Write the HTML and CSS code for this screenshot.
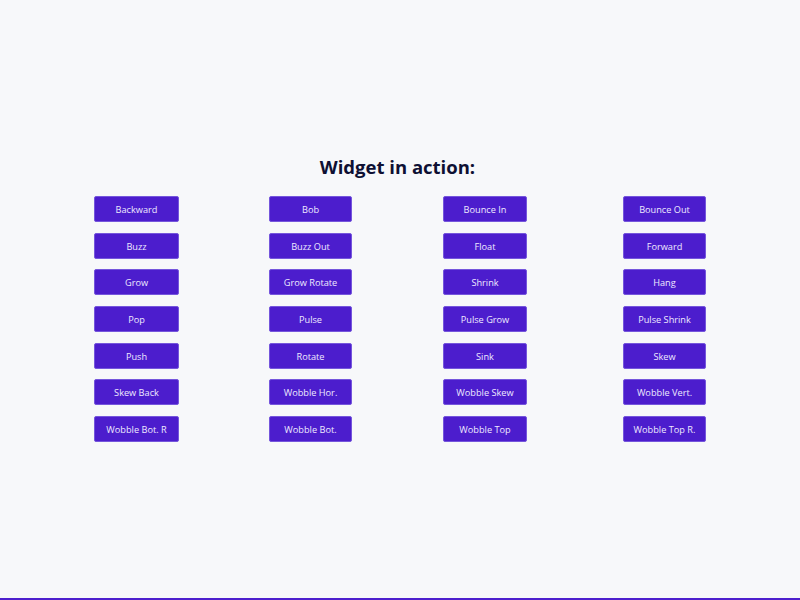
FILE: index.html
```html
<!DOCTYPE html>
<html lang="en">
<head>
<meta charset="utf-8">
<title>Widget in action</title>
<link rel="stylesheet" href="styles.css">
</head>
<body>
<main class="page">
  <h1 class="title">Widget in action:</h1>
  <div class="grid">
    <div class="col c1">
      <button class="btn">Backward</button>
      <button class="btn">Buzz</button>
      <button class="btn">Grow</button>
      <button class="btn">Pop</button>
      <button class="btn">Push</button>
      <button class="btn">Skew Back</button>
      <button class="btn">Wobble Bot. R</button>
    </div>
    <div class="col c2">
      <button class="btn">Bob</button>
      <button class="btn">Buzz Out</button>
      <button class="btn">Grow Rotate</button>
      <button class="btn">Pulse</button>
      <button class="btn">Rotate</button>
      <button class="btn">Wobble Hor.</button>
      <button class="btn">Wobble Bot.</button>
    </div>
    <div class="col c3">
      <button class="btn">Bounce In</button>
      <button class="btn">Float</button>
      <button class="btn">Shrink</button>
      <button class="btn">Pulse Grow</button>
      <button class="btn">Sink</button>
      <button class="btn">Wobble Skew</button>
      <button class="btn">Wobble Top</button>
    </div>
    <div class="col c4">
      <button class="btn">Bounce Out</button>
      <button class="btn">Forward</button>
      <button class="btn">Hang</button>
      <button class="btn">Pulse Shrink</button>
      <button class="btn">Skew</button>
      <button class="btn">Wobble Vert.</button>
      <button class="btn">Wobble Top R.</button>
    </div>
  </div>
</main>
</body>
</html>
```

FILE: styles.css
```css
html, body {
  margin: 0;
  padding: 0;
}
body {
  background: #f7f8fa;
  font-family: "Open Sans", "Noto Sans", sans-serif;
  min-height: 100vh;
  box-sizing: border-box;
  border-bottom: 2px solid #4d1fcd;
}
.page {
  height: 598px;
  display: flex;
  flex-direction: column;
  align-items: center;
  justify-content: flex-start;
  padding-top: 153px;
  box-sizing: border-box;
}
.title {
  margin: 0 0 16px 0;
  padding-right: 5px;
  font-size: 18.5px;
  line-height: 27px;
  font-weight: 700;
  color: #0e1033;
}
.grid {
  display: grid;
  grid-template-columns: 175px 174px 180px 83px;
  width: 612px;
}
.col {
  display: flex;
  flex-direction: column;
  gap: 10.67px;
}
.c1 { width: 85px; }
.c2 { width: 83px; }
.c3 { width: 84px; }
.c4 { width: 83px; }
.btn {
  height: 26px;
  margin: 0;
  padding: 1px 0 0 0;
  border: 1px solid #7556dc;
  border-radius: 2px;
  background: #4c1dcd;
  color: #efeaff;
  font-family: "Open Sans", "Noto Sans", sans-serif;
  font-size: 9.2px;
  line-height: 23px;
  white-space: nowrap;
  cursor: pointer;
}
```
